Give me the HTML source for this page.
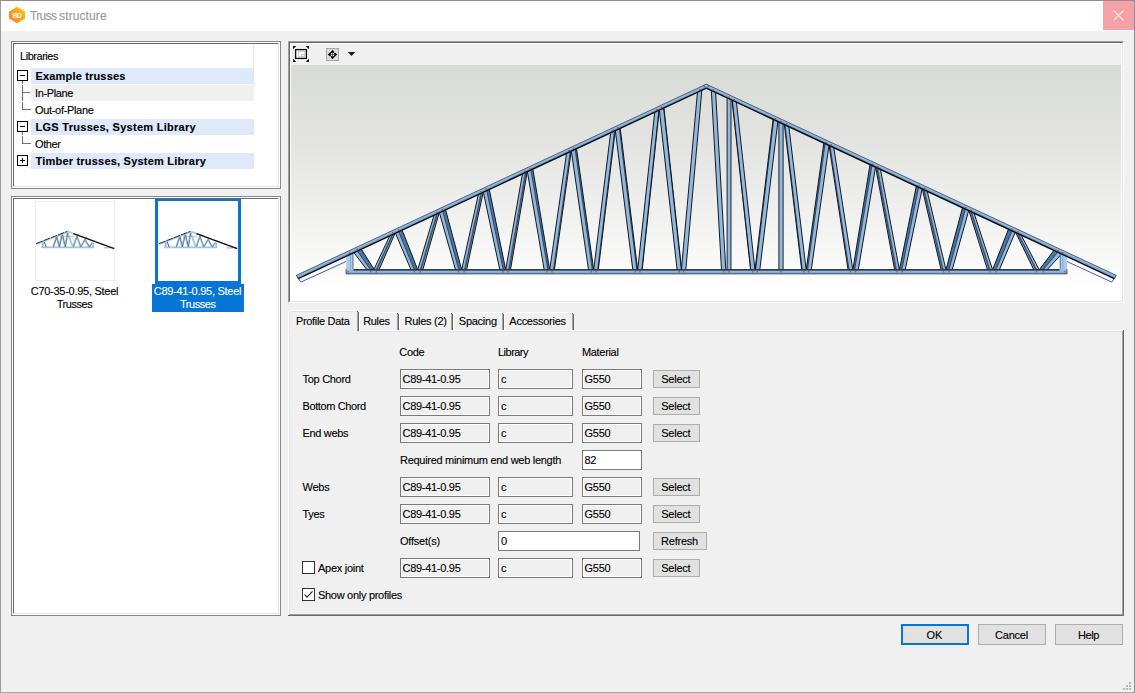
<!DOCTYPE html>
<html lang="en"><head><meta charset="utf-8"><title>Truss structure</title>
<style>
html,body{margin:0;padding:0;}
body{width:1135px;height:693px;overflow:hidden;background:#f0f0f0;position:relative;font-family:"Liberation Sans", sans-serif;font-size:11px;}
div,span.t,svg{position:absolute;box-sizing:border-box;}
span.t{white-space:nowrap;-webkit-text-stroke:0.12px currentColor;}
.inp{border:1px solid #7a7a7a;background:#f0f0f0;box-shadow:inset 0 0 0 1px #fff;}
.inpw{border:1px solid #7a7a7a;background:#fff;}
.btn{border:1px solid #adadad;background:#e1e1e1;}
</style></head><body>

<div style="left:0px;top:0px;width:1135px;height:693px;background:#f0f0f0;"></div>
<div style="left:0px;top:0px;width:1135px;height:1px;background:#8f8f8f;"></div>
<div style="left:0px;top:1px;width:1px;height:692px;background:#9c9c9c;"></div>
<div style="left:1134px;top:1px;width:1px;height:692px;background:#8c8c8c;"></div>
<div style="left:0px;top:692px;width:1135px;height:1px;background:#a6a6a6;"></div>
<div style="left:1px;top:1px;width:1133px;height:30px;background:#ffffff;"></div>
<div style="left:1103px;top:1px;width:31px;height:29px;background:#f5a1a8;"></div>
<svg style="left:1103px;top:1px" width="31" height="29" viewBox="0 0 31 29"><path d="M10.5 9.5 L20.5 19.5 M20.5 9.5 L10.5 19.5" stroke="#fde9ea" stroke-width="1.1" fill="none"/></svg>
<svg style="left:8px;top:6px" width="18" height="18" viewBox="8 6 18 18">
<defs><linearGradient id="hg" x1="0" y1="1" x2="1" y2="0"><stop offset="0" stop-color="#f5861f"/><stop offset="0.5" stop-color="#f99d1c"/><stop offset="1" stop-color="#ffc60b"/></linearGradient></defs>
<path d="M17 7.6 L24.300 11.800 L24.300 18.200 L17 22.400 L9.700 18.200 L9.700 11.800 Z" fill="url(#hg)" stroke="url(#hg)" stroke-width="1.3" stroke-linejoin="round"/>
<text x="17.100" y="17.700" font-family='"Liberation Sans",sans-serif' font-size="6.800" font-weight="bold" fill="#fff" text-anchor="middle" letter-spacing="-0.3">BD</text></svg>
<span class="t" style="left:30px;top:9.03px;font-size:12px;line-height:14px;color:#999999;word-spacing:-0.5px;"><span style="letter-spacing:-0.66px">Truss</span> <span style="letter-spacing:0.1px">structure</span></span>
<div style="left:11px;top:41px;width:270px;height:148px;border:1px solid #828790;background:#fff;"></div>
<div style="left:13px;top:43px;width:266px;height:1px;background:#696969;"></div>
<div style="left:13px;top:43px;width:1px;height:144px;background:#696969;"></div>
<div style="left:13px;top:186px;width:266px;height:1px;background:#e3e3e3;"></div>
<div style="left:278px;top:43px;width:1px;height:144px;background:#e3e3e3;"></div>
<div style="left:253px;top:44px;width:1px;height:24px;background:#e5e5e5;"></div>
<span class="t" id="t0" style="left:20px;top:49.86px;font-size:11px;line-height:13px;color:#000;letter-spacing:-0.465px;">Libraries</span>
<div style="left:31px;top:68px;width:223px;height:16px;background:#dfe9fc;"></div>
<span class="t" id="t1" style="left:35.5px;top:69.86px;font-size:11px;line-height:13px;color:#000;font-weight:bold;letter-spacing:0.171px;">Example trusses</span>
<div style="left:31px;top:85px;width:223px;height:16px;background:#f0f0f0;"></div>
<span class="t" id="t2" style="left:35px;top:86.86px;font-size:11px;line-height:13px;color:#000;letter-spacing:-0.373px;">In-Plane</span>
<span class="t" id="t3" style="left:35px;top:103.86px;font-size:11px;line-height:13px;color:#000;letter-spacing:-0.323px;">Out-of-Plane</span>
<div style="left:31px;top:119px;width:223px;height:16px;background:#dfe9fc;"></div>
<span class="t" id="t4" style="left:35.5px;top:120.86px;font-size:11px;line-height:13px;color:#000;font-weight:bold;letter-spacing:0.283px;">LGS Trusses, System Library</span>
<span class="t" id="t5" style="left:35px;top:137.86px;font-size:11px;line-height:13px;color:#000;letter-spacing:-0.403px;">Other</span>
<div style="left:31px;top:153px;width:223px;height:16px;background:#dfe9fc;"></div>
<span class="t" id="t6" style="left:35.5px;top:154.86px;font-size:11px;line-height:13px;color:#000;font-weight:bold;letter-spacing:0.208px;">Timber trusses, System Library</span>
<svg style="left:14px;top:44px" width="30" height="140" viewBox="14 44 30 140" shape-rendering="crispEdges"><rect x="22" y="81" width="1" height="3" fill="#707070"/><rect x="22" y="85" width="1" height="16" fill="#707070"/><rect x="22" y="102" width="1" height="8" fill="#707070"/><rect x="22" y="92" width="8" height="1" fill="#707070"/><rect x="22" y="109" width="9" height="1" fill="#707070"/><rect x="22" y="132" width="1" height="3" fill="#707070"/><rect x="22" y="136" width="1" height="8" fill="#707070"/><rect x="22" y="143" width="9" height="1" fill="#707070"/><rect x="17.5" y="70.5" width="10" height="10" fill="#fff" stroke="#000" stroke-width="1"/><rect x="20" y="75" width="5" height="1" fill="#000"/><rect x="17.5" y="121.5" width="10" height="10" fill="#fff" stroke="#000" stroke-width="1"/><rect x="20" y="126" width="5" height="1" fill="#000"/><rect x="17.5" y="155.5" width="10" height="10" fill="#fff" stroke="#000" stroke-width="1"/><rect x="20" y="160" width="5" height="1" fill="#000"/><rect x="22" y="158" width="1" height="5" fill="#000"/></svg>
<div style="left:11px;top:196px;width:270px;height:420px;border:1px solid #828790;background:#fff;"></div>
<div style="left:13px;top:198px;width:266px;height:1px;background:#696969;"></div>
<div style="left:13px;top:198px;width:1px;height:416px;background:#696969;"></div>
<div style="left:13px;top:613px;width:266px;height:1px;background:#e3e3e3;"></div>
<div style="left:278px;top:198px;width:1px;height:416px;background:#e3e3e3;"></div>
<div style="left:35px;top:201px;width:80px;height:80px;border:1px solid #ececec;background:#fff;"></div>
<div style="left:155px;top:199px;width:86px;height:85px;border:3px solid #0675d6;border-top-width:2px;background:#fff;"></div>
<div style="left:152px;top:284px;width:92px;height:28px;background:#0675d6;"></div>
<span class="t" id="t7" style="left:74.5px;top:284.86px;font-size:11px;line-height:13px;color:#000;letter-spacing:-0.269px;transform:translateX(-50%);">C70-35-0.95, Steel</span>
<span class="t" id="t8" style="left:74.5px;top:297.86px;font-size:11px;line-height:13px;color:#000;letter-spacing:-0.460px;transform:translateX(-50%);">Trusses</span>
<span class="t" id="t9" style="left:197.5px;top:284.86px;font-size:11px;line-height:13px;color:#fff;letter-spacing:-0.269px;transform:translateX(-50%);">C89-41-0.95, Steel</span>
<span class="t" id="t10" style="left:197.7px;top:297.86px;font-size:11px;line-height:13px;color:#fff;letter-spacing:-0.460px;transform:translateX(-50%);">Trusses</span>
<svg style="left:35px;top:201px" width="80" height="80" viewBox="35 201 80 80"><path d="M41.200 247.400 L94.300 247.400" stroke="#9dc4e8" stroke-width="1.7" fill="none"/><path d="M103.500 247.800 L110 247.800" stroke="#9dc4e8" stroke-width="1.3" fill="none"/><path d="M42.700 241.300 L42.700 247.500" stroke="#9dc4e8" stroke-width="2.2" fill="none"/><path d="M93.200 243 L93.200 247.500" stroke="#9dc4e8" stroke-width="1.6" fill="none"/><path d="M53.0 247.0 L56.5 236.4 L59.0 247.0 L62.0 234.2 L65.0 247.0 L67.4 232.6 L73.0 247.0 L76.7 236.2 L80.5 247.0 L84.8 239.4 L89.0 247.0 L92.2 242.4" stroke="#9dc4e8" stroke-width="1.7" fill="none" stroke-linejoin="round"/><path d="M44.0 241.5 L46.2 247.0" stroke="#39434e" stroke-width="0.9" fill="none"/><path d="M53.5 247.0 L57.0 236.4 L59.5 247.0 L62.5 234.2 L65.5 247.0 L67.9 232.6" stroke="#3a4450" stroke-width="0.55" fill="none"/><path d="M73.5 247.0 L77.2 236.2 L81.0 247.0 L85.3 239.4 L89.5 247.0 L92.7 242.4" stroke="#4a545f" stroke-width="0.5" fill="none"/><path d="M60 236.400 L74.500 236.400" stroke="#8f979f" stroke-width="0.6" fill="none"/><path d="M36.1 244.5 L67.4 232.20000000000002" stroke="#9dc4e8" stroke-width="1.3" fill="none"/><path d="M36.1 243.6 L67.4 231.3" stroke="#232b35" stroke-width="1" stroke-dasharray="7 0.800" fill="none"/><path d="M67.4 231.3 L74.4 233.9" stroke="#9dc4e8" stroke-width="1.5" fill="none"/><path d="M73.4 233.53 L114.2 248.7" stroke="#0c0c0c" stroke-width="1.35" fill="none"/><rect x="77.4" y="234.3" width="1.100" height="0.900" fill="#b0242c"/><rect x="85.4" y="237.3" width="1.100" height="0.900" fill="#b0242c"/><rect x="93.4" y="240.3" width="1.100" height="0.900" fill="#b0242c"/><rect x="101.4" y="243.2" width="1.100" height="0.900" fill="#b0242c"/><rect x="112.4" y="247.3" width="1.100" height="0.900" fill="#b0242c"/></svg>
<svg style="left:158px;top:201px" width="80" height="80" viewBox="35 201 80 80"><path d="M41.200 247.400 L94.300 247.400" stroke="#9dc4e8" stroke-width="1.7" fill="none"/><path d="M103.500 247.800 L110 247.800" stroke="#9dc4e8" stroke-width="1.3" fill="none"/><path d="M42.700 241.300 L42.700 247.500" stroke="#9dc4e8" stroke-width="2.2" fill="none"/><path d="M93.200 243 L93.200 247.500" stroke="#9dc4e8" stroke-width="1.6" fill="none"/><path d="M53.0 247.0 L56.5 236.4 L59.0 247.0 L62.0 234.2 L65.0 247.0 L67.4 232.6 L73.0 247.0 L76.7 236.2 L80.5 247.0 L84.8 239.4 L89.0 247.0 L92.2 242.4" stroke="#9dc4e8" stroke-width="1.7" fill="none" stroke-linejoin="round"/><path d="M44.0 241.5 L46.2 247.0" stroke="#39434e" stroke-width="0.9" fill="none"/><path d="M53.5 247.0 L57.0 236.4 L59.5 247.0 L62.5 234.2 L65.5 247.0 L67.9 232.6" stroke="#3a4450" stroke-width="0.55" fill="none"/><path d="M73.5 247.0 L77.2 236.2 L81.0 247.0 L85.3 239.4 L89.5 247.0 L92.7 242.4" stroke="#4a545f" stroke-width="0.5" fill="none"/><path d="M60 236.400 L74.500 236.400" stroke="#8f979f" stroke-width="0.6" fill="none"/><path d="M36.1 244.5 L67.4 232.20000000000002" stroke="#9dc4e8" stroke-width="1.3" fill="none"/><path d="M36.1 243.6 L67.4 231.3" stroke="#232b35" stroke-width="1" stroke-dasharray="7 0.800" fill="none"/><path d="M67.4 231.3 L74.4 233.9" stroke="#9dc4e8" stroke-width="1.5" fill="none"/><path d="M73.4 233.53 L114.2 248.7" stroke="#0c0c0c" stroke-width="1.35" fill="none"/><rect x="77.4" y="234.3" width="1.100" height="0.900" fill="#b0242c"/><rect x="85.4" y="237.3" width="1.100" height="0.900" fill="#b0242c"/><rect x="93.4" y="240.3" width="1.100" height="0.900" fill="#b0242c"/><rect x="101.4" y="243.2" width="1.100" height="0.900" fill="#b0242c"/><rect x="112.4" y="247.3" width="1.100" height="0.900" fill="#b0242c"/></svg>
<div style="left:288px;top:41px;width:836px;height:262px;background:#f0f0f0;border-top:1px solid #a0a0a0;border-left:1px solid #a0a0a0;border-right:1px solid #fff;border-bottom:1px solid #fff;"></div>
<div style="left:289px;top:42px;width:834px;height:260px;border-top:1px solid #696969;border-left:1px solid #696969;border-right:1px solid #e3e3e3;border-bottom:1px solid #e3e3e3;"></div>
<div style="left:290px;top:43px;width:832px;height:258px;background:#fff;"></div>
<div style="left:291px;top:44px;width:830px;height:21px;background:#f0f0f0;"></div>
<div style="left:291px;top:65px;width:830px;height:236px;background:linear-gradient(to bottom,#d8dad5 0%,#e4e5e2 35%,#f3f3f2 70%,#ffffff 95%);"></div>
<svg style="left:291px;top:44px" width="70" height="21" viewBox="291 44 70 21">
<path d="M293 46 H296.300 L293 49.300 Z M309 46 H305.700 L309 49.300 Z M293 62 H296.300 L293 58.700 Z M309 62 H305.700 L309 58.700 Z" fill="#111"/>
<rect x="295.600" y="49.600" width="10.800" height="8.800" fill="#fdfdfd" stroke="#0a0a0a" stroke-width="1.300"/>
<rect x="298.500" y="51.500" width="6" height="5" fill="#fff" stroke="#d2d2d2" stroke-width="1"/>
<rect x="301.500" y="54.500" width="3" height="2" fill="#fafafa" stroke="#c6c6c6" stroke-width="1"/>
<rect x="326.500" y="48.500" width="12" height="12" fill="#dcdcdc" stroke="#a6a6a6" stroke-width="1"/>
<path d="M332.500 49.700 L335.200 52.900 H329.800 Z M332.500 59.300 L335.200 56.100 H329.800 Z M327.700 54.500 L330.900 51.800 V57.200 Z M337.300 54.500 L334.100 51.800 V57.200 Z" fill="#0c0c0c"/>
<rect x="331" y="53" width="3" height="3" fill="#e6e6e6"/>
<path d="M332.500 52 V57 M330 54.500 H335" stroke="#444" stroke-width="0.800"/>
<path d="M347.700 52 H355.300 L351.500 56 Z" fill="#1c1c1c"/>
</svg>
<svg style="left:291px;top:65px" width="831" height="236" viewBox="291 65 831 236"><path d="M298.6 278.7 L300.8 282.1 L346 261.500" stroke="#3a3fb5" stroke-width="0.9" fill="none"/><path d="M1114.0 278.7 L1111.8 282.1 L1067 261.500" stroke="#3a3fb5" stroke-width="0.9" fill="none"/><polygon points="353.6,252.2 357.1,250.6 370.5,269.8 366.9,269.8" fill="#93b8de"/><polygon points="357.1,250.6 361.1,248.8 374.4,269.8 370.5,269.8" fill="#4876a3"/><line x1="357.1" y1="250.6" x2="370.5" y2="269.8" stroke="#101a28" stroke-width="0.7"/><line x1="353.6" y1="252.2" x2="366.9" y2="269.8" stroke="#0b0f16" stroke-width="0.95"/><line x1="361.1" y1="248.8" x2="374.4" y2="269.8" stroke="#0b0f16" stroke-width="0.95"/><polygon points="390.0,235.3 393.1,233.8 376.8,269.8 373.7,269.8" fill="#93b8de"/><polygon points="393.1,233.8 395.3,232.8 379.0,269.8 376.8,269.8" fill="#6f9bc6"/><line x1="393.1" y1="233.8" x2="376.8" y2="269.8" stroke="#101a28" stroke-width="0.7"/><line x1="390.0" y1="235.3" x2="373.7" y2="269.8" stroke="#0b0f16" stroke-width="0.95"/><line x1="395.3" y1="232.8" x2="379.0" y2="269.8" stroke="#0b0f16" stroke-width="0.95"/><line x1="392.4" y1="234.1" x2="376.1" y2="269.8" stroke="#1c2c40" stroke-width="0.5"/><polygon points="395.3,232.8 398.5,231.3 414.3,269.8 411.0,269.8" fill="#93b8de"/><polygon points="398.5,231.3 402.0,229.7 417.7,269.8 414.3,269.8" fill="#4876a3"/><line x1="398.5" y1="231.3" x2="414.3" y2="269.8" stroke="#101a28" stroke-width="0.7"/><line x1="395.3" y1="232.8" x2="411.0" y2="269.8" stroke="#0b0f16" stroke-width="0.95"/><line x1="402.0" y1="229.7" x2="417.7" y2="269.8" stroke="#0b0f16" stroke-width="0.95"/><polygon points="434.2,214.6 437.4,213.2 420.9,269.8 417.7,269.8" fill="#93b8de"/><polygon points="437.4,213.2 439.3,212.3 422.8,269.8 420.9,269.8" fill="#6f9bc6"/><line x1="437.4" y1="213.2" x2="420.9" y2="269.8" stroke="#101a28" stroke-width="0.7"/><line x1="434.2" y1="214.6" x2="417.7" y2="269.8" stroke="#0b0f16" stroke-width="0.95"/><line x1="439.3" y1="212.3" x2="422.8" y2="269.8" stroke="#0b0f16" stroke-width="0.95"/><line x1="436.7" y1="213.5" x2="420.2" y2="269.8" stroke="#1c2c40" stroke-width="0.5"/><polygon points="439.3,212.3 442.6,210.8 458.8,269.8 455.5,269.8" fill="#93b8de"/><polygon points="442.6,210.8 445.5,209.4 461.7,269.8 458.8,269.8" fill="#4876a3"/><line x1="442.6" y1="210.8" x2="458.8" y2="269.8" stroke="#101a28" stroke-width="0.7"/><line x1="439.3" y1="212.3" x2="455.5" y2="269.8" stroke="#0b0f16" stroke-width="0.95"/><line x1="445.5" y1="209.4" x2="461.7" y2="269.8" stroke="#0b0f16" stroke-width="0.95"/><polygon points="478.4,194.1 481.7,192.5 465.0,269.8 461.7,269.8" fill="#93b8de"/><polygon points="481.7,192.5 483.3,191.8 466.6,269.8 465.0,269.8" fill="#6f9bc6"/><line x1="481.7" y1="192.5" x2="465.0" y2="269.8" stroke="#101a28" stroke-width="0.7"/><line x1="478.4" y1="194.1" x2="461.7" y2="269.8" stroke="#0b0f16" stroke-width="0.95"/><line x1="483.3" y1="191.8" x2="466.6" y2="269.8" stroke="#0b0f16" stroke-width="0.95"/><line x1="481.0" y1="192.8" x2="464.3" y2="269.8" stroke="#1c2c40" stroke-width="0.5"/><polygon points="483.3,191.8 486.7,190.2 503.3,269.8 499.8,269.8" fill="#93b8de"/><polygon points="486.7,190.2 489.2,189.0 505.7,269.8 503.3,269.8" fill="#4876a3"/><line x1="486.7" y1="190.2" x2="503.3" y2="269.8" stroke="#101a28" stroke-width="0.7"/><line x1="483.3" y1="191.8" x2="499.8" y2="269.8" stroke="#0b0f16" stroke-width="0.95"/><line x1="489.2" y1="189.0" x2="505.7" y2="269.8" stroke="#0b0f16" stroke-width="0.95"/><polygon points="522.5,173.5 526.0,171.9 509.2,269.8 505.7,269.8" fill="#93b8de"/><polygon points="526.0,171.9 527.3,171.3 510.5,269.8 509.2,269.8" fill="#6f9bc6"/><line x1="526.0" y1="171.9" x2="509.2" y2="269.8" stroke="#101a28" stroke-width="0.7"/><line x1="522.5" y1="173.5" x2="505.7" y2="269.8" stroke="#0b0f16" stroke-width="0.95"/><line x1="527.3" y1="171.3" x2="510.5" y2="269.8" stroke="#0b0f16" stroke-width="0.95"/><line x1="525.2" y1="172.2" x2="508.4" y2="269.8" stroke="#1c2c40" stroke-width="0.5"/><polygon points="527.3,171.3 530.9,169.6 547.8,269.8 544.2,269.8" fill="#93b8de"/><polygon points="530.9,169.6 532.8,168.7 549.7,269.8 547.8,269.8" fill="#4876a3"/><line x1="530.9" y1="169.6" x2="547.8" y2="269.8" stroke="#101a28" stroke-width="0.7"/><line x1="527.3" y1="171.3" x2="544.2" y2="269.8" stroke="#0b0f16" stroke-width="0.95"/><line x1="532.8" y1="168.7" x2="549.7" y2="269.8" stroke="#0b0f16" stroke-width="0.95"/><polygon points="566.6,152.9 570.3,151.2 553.4,269.8 549.7,269.8" fill="#93b8de"/><polygon points="570.3,151.2 571.3,150.7 554.4,269.8 553.4,269.8" fill="#6f9bc6"/><line x1="570.3" y1="151.2" x2="553.4" y2="269.8" stroke="#101a28" stroke-width="0.7"/><line x1="566.6" y1="152.9" x2="549.7" y2="269.8" stroke="#0b0f16" stroke-width="0.95"/><line x1="571.3" y1="150.7" x2="554.4" y2="269.8" stroke="#0b0f16" stroke-width="0.95"/><polygon points="571.3,150.7 575.1,149.0 592.3,269.8 588.5,269.8" fill="#93b8de"/><polygon points="575.1,149.0 576.5,148.3 593.7,269.8 592.3,269.8" fill="#4876a3"/><line x1="575.1" y1="149.0" x2="592.3" y2="269.8" stroke="#101a28" stroke-width="0.7"/><line x1="571.3" y1="150.7" x2="588.5" y2="269.8" stroke="#0b0f16" stroke-width="0.95"/><line x1="576.5" y1="148.3" x2="593.7" y2="269.8" stroke="#0b0f16" stroke-width="0.95"/><polygon points="610.7,132.4 614.6,130.5 597.6,269.8 593.7,269.8" fill="#93b8de"/><polygon points="614.6,130.5 615.3,130.2 598.3,269.8 597.6,269.8" fill="#6f9bc6"/><line x1="614.6" y1="130.5" x2="597.6" y2="269.8" stroke="#101a28" stroke-width="0.7"/><line x1="610.7" y1="132.4" x2="593.7" y2="269.8" stroke="#0b0f16" stroke-width="0.95"/><line x1="615.3" y1="130.2" x2="598.3" y2="269.8" stroke="#0b0f16" stroke-width="0.95"/><polygon points="615.3,130.2 619.3,128.4 636.8,269.8 632.8,269.8" fill="#93b8de"/><polygon points="619.3,128.4 620.2,127.9 637.7,269.8 636.8,269.8" fill="#4876a3"/><line x1="619.3" y1="128.4" x2="636.8" y2="269.8" stroke="#101a28" stroke-width="0.7"/><line x1="615.3" y1="130.2" x2="632.8" y2="269.8" stroke="#0b0f16" stroke-width="0.95"/><line x1="620.2" y1="127.9" x2="637.7" y2="269.8" stroke="#0b0f16" stroke-width="0.95"/><polygon points="654.8,111.8 658.9,109.9 641.8,269.8 637.7,269.8" fill="#93b8de"/><polygon points="658.9,109.9 659.3,109.7 642.2,269.8 641.8,269.8" fill="#6f9bc6"/><line x1="658.9" y1="109.9" x2="641.8" y2="269.8" stroke="#101a28" stroke-width="0.7"/><line x1="654.8" y1="111.8" x2="637.7" y2="269.8" stroke="#0b0f16" stroke-width="0.95"/><line x1="659.3" y1="109.7" x2="642.2" y2="269.8" stroke="#0b0f16" stroke-width="0.95"/><polygon points="659.3,109.7 663.5,107.8 681.3,269.8 677.1,269.8" fill="#93b8de"/><polygon points="663.5,107.8 663.9,107.6 681.7,269.8 681.3,269.8" fill="#4876a3"/><line x1="663.5" y1="107.8" x2="681.3" y2="269.8" stroke="#101a28" stroke-width="0.7"/><line x1="659.3" y1="109.7" x2="677.1" y2="269.8" stroke="#0b0f16" stroke-width="0.95"/><line x1="663.9" y1="107.6" x2="681.7" y2="269.8" stroke="#0b0f16" stroke-width="0.95"/><polygon points="697.5,91.9 701.8,89.9 685.7,269.8 681.4,269.8" fill="#93b8de"/><line x1="697.5" y1="91.9" x2="681.4" y2="269.8" stroke="#0b0f16" stroke-width="0.95"/><line x1="701.9" y1="89.9" x2="685.8" y2="269.8" stroke="#0b0f16" stroke-width="0.95"/><polygon points="711.4,90.2 715.6,92.2 725.8,269.8 721.5,269.8" fill="#93b8de"/><line x1="711.3" y1="90.1" x2="721.5" y2="269.8" stroke="#0b0f16" stroke-width="0.95"/><line x1="715.6" y1="92.2" x2="725.8" y2="269.8" stroke="#0b0f16" stroke-width="0.95"/><polygon points="732.3,99.9 736.4,101.8 755.0,269.8 750.8,269.8" fill="#93b8de"/><polygon points="732.0,99.8 732.3,99.9 750.8,269.8 750.6,269.8" fill="#6f9bc6"/><line x1="732.3" y1="99.9" x2="750.8" y2="269.8" stroke="#101a28" stroke-width="0.7"/><line x1="732.0" y1="99.8" x2="750.6" y2="269.8" stroke="#0b0f16" stroke-width="0.95"/><line x1="736.4" y1="101.8" x2="755.0" y2="269.8" stroke="#0b0f16" stroke-width="0.95"/><polygon points="773.8,119.3 777.9,121.2 759.8,269.8 755.7,269.8" fill="#93b8de"/><polygon points="773.1,119.0 773.8,119.3 755.7,269.8 755.0,269.8" fill="#4876a3"/><line x1="773.8" y1="119.3" x2="755.7" y2="269.8" stroke="#101a28" stroke-width="0.7"/><line x1="773.1" y1="119.0" x2="755.0" y2="269.8" stroke="#0b0f16" stroke-width="0.95"/><line x1="777.9" y1="121.2" x2="759.8" y2="269.8" stroke="#0b0f16" stroke-width="0.95"/><polygon points="1058.1,251.8 1062.0,253.6 1047.0,269.8 1043.2,269.8" fill="#93b8de"/><polygon points="1054.2,250.0 1058.1,251.8 1043.2,269.8 1039.2,269.8" fill="#4876a3"/><line x1="1058.1" y1="251.8" x2="1043.2" y2="269.8" stroke="#101a28" stroke-width="0.7"/><line x1="1054.2" y1="250.0" x2="1039.2" y2="269.8" stroke="#0b0f16" stroke-width="0.95"/><line x1="1062.0" y1="253.6" x2="1047.0" y2="269.8" stroke="#0b0f16" stroke-width="0.95"/><polygon points="1017.6,232.9 1020.8,234.4 1039.2,269.8 1036.0,269.8" fill="#93b8de"/><polygon points="1015.4,231.9 1017.6,232.9 1036.0,269.8 1033.8,269.8" fill="#6f9bc6"/><line x1="1017.6" y1="232.9" x2="1036.0" y2="269.8" stroke="#101a28" stroke-width="0.7"/><line x1="1015.4" y1="231.9" x2="1033.8" y2="269.8" stroke="#0b0f16" stroke-width="0.95"/><line x1="1020.8" y1="234.4" x2="1039.2" y2="269.8" stroke="#0b0f16" stroke-width="0.95"/><line x1="1018.3" y1="233.3" x2="1036.7" y2="269.8" stroke="#1c2c40" stroke-width="0.5"/><polygon points="1012.2,230.4 1015.4,231.9 999.3,269.8 996.0,269.8" fill="#93b8de"/><polygon points="1008.7,228.8 1012.2,230.4 996.0,269.8 992.6,269.8" fill="#4876a3"/><line x1="1012.2" y1="230.4" x2="996.0" y2="269.8" stroke="#101a28" stroke-width="0.7"/><line x1="1008.7" y1="228.8" x2="992.6" y2="269.8" stroke="#0b0f16" stroke-width="0.95"/><line x1="1015.4" y1="231.9" x2="999.3" y2="269.8" stroke="#0b0f16" stroke-width="0.95"/><polygon points="970.7,211.1 973.9,212.6 992.6,269.8 989.4,269.8" fill="#93b8de"/><polygon points="968.8,210.2 970.7,211.1 989.4,269.8 987.5,269.8" fill="#6f9bc6"/><line x1="970.7" y1="211.1" x2="989.4" y2="269.8" stroke="#101a28" stroke-width="0.7"/><line x1="968.8" y1="210.2" x2="987.5" y2="269.8" stroke="#0b0f16" stroke-width="0.95"/><line x1="973.9" y1="212.6" x2="992.6" y2="269.8" stroke="#0b0f16" stroke-width="0.95"/><line x1="971.4" y1="211.4" x2="990.1" y2="269.8" stroke="#1c2c40" stroke-width="0.5"/><polygon points="965.5,208.6 968.8,210.2 952.2,269.8 948.9,269.8" fill="#93b8de"/><polygon points="962.6,207.3 965.5,208.6 948.9,269.8 946.0,269.8" fill="#4876a3"/><line x1="965.5" y1="208.6" x2="948.9" y2="269.8" stroke="#101a28" stroke-width="0.7"/><line x1="962.6" y1="207.3" x2="946.0" y2="269.8" stroke="#0b0f16" stroke-width="0.95"/><line x1="968.8" y1="210.2" x2="952.2" y2="269.8" stroke="#0b0f16" stroke-width="0.95"/><polygon points="923.7,189.2 927.1,190.7 946.0,269.8 942.6,269.8" fill="#93b8de"/><polygon points="922.2,188.5 923.7,189.2 942.6,269.8 941.1,269.8" fill="#6f9bc6"/><line x1="923.7" y1="189.2" x2="942.6" y2="269.8" stroke="#101a28" stroke-width="0.7"/><line x1="922.2" y1="188.5" x2="941.1" y2="269.8" stroke="#0b0f16" stroke-width="0.95"/><line x1="927.1" y1="190.7" x2="946.0" y2="269.8" stroke="#0b0f16" stroke-width="0.95"/><line x1="924.5" y1="189.5" x2="943.4" y2="269.8" stroke="#1c2c40" stroke-width="0.5"/><polygon points="918.7,186.8 922.2,188.5 905.2,269.8 901.8,269.8" fill="#93b8de"/><polygon points="916.4,185.7 918.7,186.8 901.8,269.8 899.4,269.8" fill="#4876a3"/><line x1="918.7" y1="186.8" x2="901.8" y2="269.8" stroke="#101a28" stroke-width="0.7"/><line x1="916.4" y1="185.7" x2="899.4" y2="269.8" stroke="#0b0f16" stroke-width="0.95"/><line x1="922.2" y1="188.5" x2="905.2" y2="269.8" stroke="#0b0f16" stroke-width="0.95"/><polygon points="876.8,167.3 880.4,169.0 899.4,269.8 895.9,269.8" fill="#93b8de"/><polygon points="875.6,166.7 876.8,167.3 895.9,269.8 894.6,269.8" fill="#6f9bc6"/><line x1="876.8" y1="167.3" x2="895.9" y2="269.8" stroke="#101a28" stroke-width="0.7"/><line x1="875.6" y1="166.7" x2="894.6" y2="269.8" stroke="#0b0f16" stroke-width="0.95"/><line x1="880.4" y1="169.0" x2="899.4" y2="269.8" stroke="#0b0f16" stroke-width="0.95"/><line x1="877.6" y1="167.7" x2="896.6" y2="269.8" stroke="#1c2c40" stroke-width="0.5"/><polygon points="872.0,165.0 875.6,166.7 858.3,269.8 854.6,269.8" fill="#93b8de"/><polygon points="870.1,164.2 872.0,165.0 854.6,269.8 852.8,269.8" fill="#4876a3"/><line x1="872.0" y1="165.0" x2="854.6" y2="269.8" stroke="#101a28" stroke-width="0.7"/><line x1="870.1" y1="164.2" x2="852.8" y2="269.8" stroke="#0b0f16" stroke-width="0.95"/><line x1="875.6" y1="166.7" x2="858.3" y2="269.8" stroke="#0b0f16" stroke-width="0.95"/><polygon points="829.9,145.4 833.7,147.2 852.8,269.8 849.1,269.8" fill="#93b8de"/><polygon points="829.0,145.0 829.9,145.4 849.1,269.8 848.1,269.8" fill="#6f9bc6"/><line x1="829.9" y1="145.4" x2="849.1" y2="269.8" stroke="#101a28" stroke-width="0.7"/><line x1="829.0" y1="145.0" x2="848.1" y2="269.8" stroke="#0b0f16" stroke-width="0.95"/><line x1="833.7" y1="147.2" x2="852.8" y2="269.8" stroke="#0b0f16" stroke-width="0.95"/><polygon points="825.2,143.2 829.0,145.0 811.3,269.8 807.5,269.8" fill="#93b8de"/><polygon points="823.9,142.6 825.2,143.2 807.5,269.8 806.2,269.8" fill="#4876a3"/><line x1="825.2" y1="143.2" x2="807.5" y2="269.8" stroke="#101a28" stroke-width="0.7"/><line x1="823.9" y1="142.6" x2="806.2" y2="269.8" stroke="#0b0f16" stroke-width="0.95"/><line x1="829.0" y1="145.0" x2="811.3" y2="269.8" stroke="#0b0f16" stroke-width="0.95"/><polygon points="784.9,124.4 788.8,126.3 806.2,269.8 802.3,269.8" fill="#93b8de"/><polygon points="784.3,124.2 784.9,124.4 802.3,269.8 801.7,269.8" fill="#6f9bc6"/><line x1="784.9" y1="124.4" x2="802.3" y2="269.8" stroke="#101a28" stroke-width="0.7"/><line x1="784.3" y1="124.2" x2="801.7" y2="269.8" stroke="#0b0f16" stroke-width="0.95"/><line x1="788.8" y1="126.3" x2="806.2" y2="269.8" stroke="#0b0f16" stroke-width="0.95"/><polygon points="727.1,97.5 731.0,99.3 731.0,269.8 727.1,269.8" fill="#93b8de"/><line x1="727.1" y1="97.5" x2="727.1" y2="269.8" stroke="#0b0f16" stroke-width="0.9"/><line x1="731.0" y1="99.3" x2="731.0" y2="269.8" stroke="#0b0f16" stroke-width="0.9"/><polygon points="778.9,121.6 783.1,123.6 783.1,269.8 778.9,269.8" fill="#93b8de"/><line x1="778.9" y1="121.6" x2="778.9" y2="269.8" stroke="#0b0f16" stroke-width="0.9"/><line x1="783.1" y1="123.6" x2="783.1" y2="269.8" stroke="#0b0f16" stroke-width="0.9"/><polygon points="346.2,256.1 353.0,252.9 353.0,269.8 346.2,269.8" fill="#a8ccee"/><line x1="350.5" y1="254.1" x2="350.5" y2="269.2" stroke="#6d95bd" stroke-width="0.6"/><line x1="353.0" y1="252.9" x2="353.0" y2="269.2" stroke="#27415c" stroke-width="0.7"/><polygon points="1060.2,253.2 1067.0,256.4 1067.0,269.8 1060.2,269.8" fill="#a8ccee"/><line x1="1062.7" y1="254.4" x2="1062.7" y2="269.2" stroke="#6d95bd" stroke-width="0.6"/><line x1="1060.2" y1="253.2" x2="1060.2" y2="269.2" stroke="#27415c" stroke-width="0.7"/><polygon points="346.0,269.2 1067.0,269.2 1067.0,273.9 346.0,273.9" fill="#93b8de"/><line x1="353.5" y1="269.8" x2="1059.5" y2="269.8" stroke="#0b0f16" stroke-width="1.3"/><line x1="346.0" y1="273.0" x2="1067.0" y2="273.0" stroke="#6f9bc6" stroke-width="1.0"/><line x1="346.0" y1="273.9" x2="1067.0" y2="273.9" stroke="#1b2b3c" stroke-width="0.7"/><line x1="346.0" y1="269.2" x2="346.0" y2="273.9" stroke="#1b2b3c" stroke-width="0.7"/><line x1="1067.0" y1="269.2" x2="1067.0" y2="273.9" stroke="#1b2b3c" stroke-width="0.7"/><polygon points="296.4,275.3 706.3,84.2 706.3,88.7 298.4,278.9" fill="#93b8de"/><line x1="297.6" y1="277.4" x2="706.3" y2="87.0" stroke="#6f9bc6" stroke-width="0.8"/><line x1="296.4" y1="275.3" x2="706.3" y2="84.2" stroke="#1d3047" stroke-width="0.7"/><line x1="298.2" y1="278.6" x2="706.3" y2="88.1" stroke="#0b0f16" stroke-width="1.45"/><line x1="296.4" y1="275.3" x2="298.4" y2="278.9" stroke="#1b2b3c" stroke-width="0.8"/><polygon points="1116.2,275.3 706.3,84.2 706.3,88.7 1114.2,278.9" fill="#93b8de"/><line x1="1115.0" y1="277.4" x2="706.3" y2="87.0" stroke="#6f9bc6" stroke-width="0.8"/><line x1="1116.2" y1="275.3" x2="706.3" y2="84.2" stroke="#1d3047" stroke-width="0.7"/><line x1="1114.4" y1="278.6" x2="706.3" y2="88.1" stroke="#0b0f16" stroke-width="1.45"/><line x1="1116.2" y1="275.3" x2="1114.2" y2="278.9" stroke="#1b2b3c" stroke-width="0.8"/><polygon points="703.1,85.8 706.3,84.2 709.5,85.8 706.3,87.8" fill="#93b8de" stroke="#1d3047" stroke-width="0.5"/><rect x="356.7" y="248.6" width="1.300" height="1.300" fill="#c8323a"/><rect x="370.0" y="271.1" width="1.300" height="1.300" fill="#c8323a"/><rect x="392.0" y="232.2" width="1.300" height="1.300" fill="#c8323a"/><rect x="375.7" y="271.1" width="1.300" height="1.300" fill="#c8323a"/><rect x="398.0" y="229.4" width="1.300" height="1.300" fill="#c8323a"/><rect x="413.7" y="271.1" width="1.300" height="1.300" fill="#c8323a"/><rect x="436.1" y="211.6" width="1.300" height="1.300" fill="#c8323a"/><rect x="419.6" y="271.1" width="1.300" height="1.300" fill="#c8323a"/><rect x="441.8" y="209.0" width="1.300" height="1.300" fill="#c8323a"/><rect x="457.9" y="271.1" width="1.300" height="1.300" fill="#c8323a"/><rect x="480.2" y="191.1" width="1.300" height="1.300" fill="#c8323a"/><rect x="463.5" y="271.1" width="1.300" height="1.300" fill="#c8323a"/><rect x="485.6" y="188.5" width="1.300" height="1.300" fill="#c8323a"/><rect x="502.1" y="271.1" width="1.300" height="1.300" fill="#c8323a"/><rect x="524.3" y="170.5" width="1.300" height="1.300" fill="#c8323a"/><rect x="507.4" y="271.1" width="1.300" height="1.300" fill="#c8323a"/><rect x="529.4" y="168.1" width="1.300" height="1.300" fill="#c8323a"/><rect x="546.3" y="271.1" width="1.300" height="1.300" fill="#c8323a"/><rect x="568.3" y="150.0" width="1.300" height="1.300" fill="#c8323a"/><rect x="551.4" y="271.1" width="1.300" height="1.300" fill="#c8323a"/><rect x="573.3" y="147.7" width="1.300" height="1.300" fill="#c8323a"/><rect x="590.4" y="271.1" width="1.300" height="1.300" fill="#c8323a"/><rect x="612.4" y="129.4" width="1.300" height="1.300" fill="#c8323a"/><rect x="595.3" y="271.1" width="1.300" height="1.300" fill="#c8323a"/><rect x="617.1" y="127.2" width="1.300" height="1.300" fill="#c8323a"/><rect x="634.6" y="271.1" width="1.300" height="1.300" fill="#c8323a"/><rect x="656.4" y="108.9" width="1.300" height="1.300" fill="#c8323a"/><rect x="639.3" y="271.1" width="1.300" height="1.300" fill="#c8323a"/><rect x="660.9" y="106.8" width="1.300" height="1.300" fill="#c8323a"/><rect x="678.8" y="271.1" width="1.300" height="1.300" fill="#c8323a"/><rect x="699.1" y="89.0" width="1.300" height="1.300" fill="#c8323a"/><rect x="682.9" y="271.1" width="1.300" height="1.300" fill="#c8323a"/><rect x="712.8" y="89.3" width="1.300" height="1.300" fill="#c8323a"/><rect x="723.0" y="271.1" width="1.300" height="1.300" fill="#c8323a"/><rect x="733.6" y="99.0" width="1.300" height="1.300" fill="#c8323a"/><rect x="752.1" y="271.1" width="1.300" height="1.300" fill="#c8323a"/><rect x="774.9" y="118.2" width="1.300" height="1.300" fill="#c8323a"/><rect x="756.7" y="271.1" width="1.300" height="1.300" fill="#c8323a"/><rect x="1057.4" y="250.0" width="1.300" height="1.300" fill="#c8323a"/><rect x="1042.5" y="271.1" width="1.300" height="1.300" fill="#c8323a"/><rect x="1017.4" y="231.3" width="1.300" height="1.300" fill="#c8323a"/><rect x="1035.9" y="271.1" width="1.300" height="1.300" fill="#c8323a"/><rect x="1011.4" y="228.5" width="1.300" height="1.300" fill="#c8323a"/><rect x="995.3" y="271.1" width="1.300" height="1.300" fill="#c8323a"/><rect x="970.7" y="209.5" width="1.300" height="1.300" fill="#c8323a"/><rect x="989.4" y="271.1" width="1.300" height="1.300" fill="#c8323a"/><rect x="965.1" y="206.9" width="1.300" height="1.300" fill="#c8323a"/><rect x="948.4" y="271.1" width="1.300" height="1.300" fill="#c8323a"/><rect x="924.0" y="187.8" width="1.300" height="1.300" fill="#c8323a"/><rect x="942.9" y="271.1" width="1.300" height="1.300" fill="#c8323a"/><rect x="918.6" y="185.3" width="1.300" height="1.300" fill="#c8323a"/><rect x="901.7" y="271.1" width="1.300" height="1.300" fill="#c8323a"/><rect x="877.3" y="166.0" width="1.300" height="1.300" fill="#c8323a"/><rect x="896.4" y="271.1" width="1.300" height="1.300" fill="#c8323a"/><rect x="872.2" y="163.6" width="1.300" height="1.300" fill="#c8323a"/><rect x="854.9" y="271.1" width="1.300" height="1.300" fill="#c8323a"/><rect x="830.7" y="144.2" width="1.300" height="1.300" fill="#c8323a"/><rect x="849.8" y="271.1" width="1.300" height="1.300" fill="#c8323a"/><rect x="825.8" y="142.0" width="1.300" height="1.300" fill="#c8323a"/><rect x="808.1" y="271.1" width="1.300" height="1.300" fill="#c8323a"/><rect x="785.9" y="123.4" width="1.300" height="1.300" fill="#c8323a"/><rect x="803.3" y="271.1" width="1.300" height="1.300" fill="#c8323a"/><rect x="728.4" y="96.6" width="1.300" height="1.300" fill="#c8323a"/><rect x="728.4" y="271.1" width="1.300" height="1.300" fill="#c8323a"/><rect x="780.4" y="120.8" width="1.300" height="1.300" fill="#c8323a"/><rect x="780.4" y="271.1" width="1.300" height="1.300" fill="#c8323a"/><rect x="347.4" y="271.1" width="1.300" height="1.300" fill="#c8323a"/><rect x="1064.3" y="271.1" width="1.300" height="1.300" fill="#c8323a"/><rect x="348.9" y="252.3" width="1.300" height="1.300" fill="#c8323a"/><rect x="1062.3" y="252.2" width="1.300" height="1.300" fill="#c8323a"/></svg>
<div style="left:288px;top:330px;width:836px;height:1px;background:#fff;"></div>
<div style="left:289px;top:331px;width:834px;height:1px;background:#e3e3e3;"></div>
<div style="left:288px;top:330px;width:1px;height:286px;background:#fff;"></div>
<div style="left:289px;top:331px;width:1px;height:284px;background:#e3e3e3;"></div>
<div style="left:1122px;top:331px;width:1px;height:284px;background:#a0a0a0;"></div>
<div style="left:1123px;top:330px;width:1px;height:286px;background:#696969;"></div>
<div style="left:289px;top:614px;width:834px;height:1px;background:#a0a0a0;"></div>
<div style="left:288px;top:615px;width:836px;height:1px;background:#696969;"></div>
<div style="left:288px;top:310px;width:71px;height:22px;background:#f0f0f0;"></div>
<div style="left:288px;top:312px;width:1px;height:19px;background:#fff;"></div>
<div style="left:289px;top:311px;width:1px;height:1px;background:#fff;"></div>
<div style="left:290px;top:310px;width:67px;height:1px;background:#fff;"></div>
<div style="left:289px;top:312px;width:1px;height:20px;background:#e3e3e3;"></div>
<div style="left:290px;top:311px;width:67px;height:1px;background:#e3e3e3;"></div>
<div style="left:357px;top:312px;width:1px;height:19px;background:#a0a0a0;"></div>
<div style="left:358px;top:312px;width:1px;height:19px;background:#696969;"></div>
<div style="left:357px;top:311px;width:1px;height:1px;background:#696969;"></div>
<span class="t" id="t11" style="left:296px;top:314.86px;font-size:11px;line-height:13px;color:#000;letter-spacing:-0.332px;">Profile Data</span>
<div style="left:359px;top:314px;width:1px;height:16px;background:#fff;"></div>
<div style="left:360px;top:313px;width:1px;height:1px;background:#fff;"></div>
<div style="left:361px;top:312px;width:36px;height:1px;background:#fff;"></div>
<div style="left:397px;top:314px;width:1px;height:16px;background:#a0a0a0;"></div>
<div style="left:398px;top:314px;width:1px;height:16px;background:#696969;"></div>
<div style="left:397px;top:313px;width:1px;height:1px;background:#696969;"></div>
<span class="t" id="t12" style="left:363.2px;top:314.86px;font-size:11px;line-height:13px;color:#000;letter-spacing:-0.325px;">Rules</span>
<div style="left:399px;top:314px;width:1px;height:16px;background:#fff;"></div>
<div style="left:400px;top:313px;width:1px;height:1px;background:#fff;"></div>
<div style="left:401px;top:312px;width:50px;height:1px;background:#fff;"></div>
<div style="left:451px;top:314px;width:1px;height:16px;background:#a0a0a0;"></div>
<div style="left:452px;top:314px;width:1px;height:16px;background:#696969;"></div>
<div style="left:451px;top:313px;width:1px;height:1px;background:#696969;"></div>
<span class="t" id="t13" style="left:404.6px;top:314.86px;font-size:11px;line-height:13px;color:#000;letter-spacing:-0.292px;">Rules (2)</span>
<div style="left:453px;top:314px;width:1px;height:16px;background:#fff;"></div>
<div style="left:454px;top:313px;width:1px;height:1px;background:#fff;"></div>
<div style="left:455px;top:312px;width:47px;height:1px;background:#fff;"></div>
<div style="left:502px;top:314px;width:1px;height:16px;background:#a0a0a0;"></div>
<div style="left:503px;top:314px;width:1px;height:16px;background:#696969;"></div>
<div style="left:502px;top:313px;width:1px;height:1px;background:#696969;"></div>
<span class="t" id="t14" style="left:458.8px;top:314.86px;font-size:11px;line-height:13px;color:#000;letter-spacing:-0.252px;">Spacing</span>
<div style="left:504px;top:314px;width:1px;height:16px;background:#fff;"></div>
<div style="left:505px;top:313px;width:1px;height:1px;background:#fff;"></div>
<div style="left:506px;top:312px;width:66px;height:1px;background:#fff;"></div>
<div style="left:572px;top:314px;width:1px;height:16px;background:#a0a0a0;"></div>
<div style="left:573px;top:314px;width:1px;height:16px;background:#696969;"></div>
<div style="left:572px;top:313px;width:1px;height:1px;background:#696969;"></div>
<span class="t" id="t15" style="left:509.3px;top:314.86px;font-size:11px;line-height:13px;color:#000;letter-spacing:-0.254px;">Accessories</span>
<span class="t" id="t16" style="left:399.3px;top:345.86px;font-size:11px;line-height:13px;color:#000;letter-spacing:-0.324px;">Code</span>
<span class="t" id="t17" style="left:498px;top:345.86px;font-size:11px;line-height:13px;color:#000;letter-spacing:-0.518px;">Library</span>
<span class="t" id="t18" style="left:582px;top:345.86px;font-size:11px;line-height:13px;color:#000;letter-spacing:-0.328px;">Material</span>
<span class="t" id="t19" style="left:302.5px;top:372.86px;font-size:11px;line-height:13px;color:#000;letter-spacing:-0.290px;">Top Chord</span>
<div class="inp" style="left:400px;top:369px;width:90px;height:20px;"></div>
<span class="t" id="t20" style="left:402.5px;top:372.86px;font-size:11px;line-height:13px;color:#000;letter-spacing:-0.287px;">C89-41-0.95</span>
<div class="inp" style="left:498px;top:369px;width:75px;height:20px;"></div>
<span class="t" id="t21" style="left:501px;top:372.86px;font-size:11px;line-height:13px;color:#000;letter-spacing:-0.290px;">c</span>
<div class="inp" style="left:582px;top:369px;width:60px;height:20px;"></div>
<span class="t" id="t22" style="left:584.5px;top:372.86px;font-size:11px;line-height:13px;color:#000;letter-spacing:-0.230px;">G550</span>
<div class="btn" style="left:653px;top:370px;width:47px;height:18px;"></div>
<span class="t" id="t23" style="left:675.8px;top:372.86px;font-size:11px;line-height:13px;color:#000;letter-spacing:-0.263px;transform:translateX(-50%);">Select</span>
<span class="t" id="t24" style="left:302.5px;top:399.86px;font-size:11px;line-height:13px;color:#000;letter-spacing:-0.390px;">Bottom Chord</span>
<div class="inp" style="left:400px;top:396px;width:90px;height:20px;"></div>
<span class="t" id="t25" style="left:402.5px;top:399.86px;font-size:11px;line-height:13px;color:#000;letter-spacing:-0.287px;">C89-41-0.95</span>
<div class="inp" style="left:498px;top:396px;width:75px;height:20px;"></div>
<span class="t" id="t26" style="left:501px;top:399.86px;font-size:11px;line-height:13px;color:#000;letter-spacing:-0.290px;">c</span>
<div class="inp" style="left:582px;top:396px;width:60px;height:20px;"></div>
<span class="t" id="t27" style="left:584.5px;top:399.86px;font-size:11px;line-height:13px;color:#000;letter-spacing:-0.230px;">G550</span>
<div class="btn" style="left:653px;top:397px;width:47px;height:18px;"></div>
<span class="t" id="t28" style="left:675.8px;top:399.86px;font-size:11px;line-height:13px;color:#000;letter-spacing:-0.263px;transform:translateX(-50%);">Select</span>
<span class="t" id="t29" style="left:302.5px;top:426.86px;font-size:11px;line-height:13px;color:#000;letter-spacing:-0.327px;">End webs</span>
<div class="inp" style="left:400px;top:423px;width:90px;height:20px;"></div>
<span class="t" id="t30" style="left:402.5px;top:426.86px;font-size:11px;line-height:13px;color:#000;letter-spacing:-0.287px;">C89-41-0.95</span>
<div class="inp" style="left:498px;top:423px;width:75px;height:20px;"></div>
<span class="t" id="t31" style="left:501px;top:426.86px;font-size:11px;line-height:13px;color:#000;letter-spacing:-0.290px;">c</span>
<div class="inp" style="left:582px;top:423px;width:60px;height:20px;"></div>
<span class="t" id="t32" style="left:584.5px;top:426.86px;font-size:11px;line-height:13px;color:#000;letter-spacing:-0.230px;">G550</span>
<div class="btn" style="left:653px;top:424px;width:47px;height:18px;"></div>
<span class="t" id="t33" style="left:675.8px;top:426.86px;font-size:11px;line-height:13px;color:#000;letter-spacing:-0.263px;transform:translateX(-50%);">Select</span>
<span class="t" id="t34" style="left:400px;top:453.86px;font-size:11px;line-height:13px;color:#000;letter-spacing:-0.290px;">Required minimum end web length</span>
<div class="inpw" style="left:582px;top:450px;width:60px;height:20px;"></div>
<span class="t" id="t35" style="left:584.5px;top:453.86px;font-size:11px;line-height:13px;color:#000;letter-spacing:-0.290px;">82</span>
<span class="t" id="t36" style="left:302.5px;top:480.86px;font-size:11px;line-height:13px;color:#000;letter-spacing:-0.255px;">Webs</span>
<div class="inp" style="left:400px;top:477px;width:90px;height:20px;"></div>
<span class="t" id="t37" style="left:402.5px;top:480.86px;font-size:11px;line-height:13px;color:#000;letter-spacing:-0.287px;">C89-41-0.95</span>
<div class="inp" style="left:498px;top:477px;width:75px;height:20px;"></div>
<span class="t" id="t38" style="left:501px;top:480.86px;font-size:11px;line-height:13px;color:#000;letter-spacing:-0.290px;">c</span>
<div class="inp" style="left:582px;top:477px;width:60px;height:20px;"></div>
<span class="t" id="t39" style="left:584.5px;top:480.86px;font-size:11px;line-height:13px;color:#000;letter-spacing:-0.230px;">G550</span>
<div class="btn" style="left:653px;top:478px;width:47px;height:18px;"></div>
<span class="t" id="t40" style="left:675.8px;top:480.86px;font-size:11px;line-height:13px;color:#000;letter-spacing:-0.263px;transform:translateX(-50%);">Select</span>
<span class="t" id="t41" style="left:302.5px;top:507.86px;font-size:11px;line-height:13px;color:#000;letter-spacing:-0.290px;">Tyes</span>
<div class="inp" style="left:400px;top:504px;width:90px;height:20px;"></div>
<span class="t" id="t42" style="left:402.5px;top:507.86px;font-size:11px;line-height:13px;color:#000;letter-spacing:-0.287px;">C89-41-0.95</span>
<div class="inp" style="left:498px;top:504px;width:75px;height:20px;"></div>
<span class="t" id="t43" style="left:501px;top:507.86px;font-size:11px;line-height:13px;color:#000;letter-spacing:-0.290px;">c</span>
<div class="inp" style="left:582px;top:504px;width:60px;height:20px;"></div>
<span class="t" id="t44" style="left:584.5px;top:507.86px;font-size:11px;line-height:13px;color:#000;letter-spacing:-0.230px;">G550</span>
<div class="btn" style="left:653px;top:505px;width:47px;height:18px;"></div>
<span class="t" id="t45" style="left:675.8px;top:507.86px;font-size:11px;line-height:13px;color:#000;letter-spacing:-0.263px;transform:translateX(-50%);">Select</span>
<span class="t" id="t46" style="left:400px;top:534.86px;font-size:11px;line-height:13px;color:#000;letter-spacing:-0.220px;">Offset(s)</span>
<div class="inpw" style="left:498px;top:531px;width:142px;height:20px;"></div>
<span class="t" id="t47" style="left:501px;top:534.86px;font-size:11px;line-height:13px;color:#000;letter-spacing:-0.290px;">0</span>
<div class="btn" style="left:653px;top:532px;width:54px;height:18px;"></div>
<span class="t" id="t48" style="left:679.5px;top:534.86px;font-size:11px;line-height:13px;color:#000;letter-spacing:-0.219px;transform:translateX(-50%);">Refresh</span>
<span class="t" id="t49" style="left:318px;top:561.86px;font-size:11px;line-height:13px;color:#000;letter-spacing:-0.281px;">Apex joint</span>
<div class="inp" style="left:400px;top:558px;width:90px;height:20px;"></div>
<span class="t" id="t50" style="left:402.5px;top:561.86px;font-size:11px;line-height:13px;color:#000;letter-spacing:-0.287px;">C89-41-0.95</span>
<div class="inp" style="left:498px;top:558px;width:75px;height:20px;"></div>
<span class="t" id="t51" style="left:501px;top:561.86px;font-size:11px;line-height:13px;color:#000;letter-spacing:-0.290px;">c</span>
<div class="inp" style="left:582px;top:558px;width:60px;height:20px;"></div>
<span class="t" id="t52" style="left:584.5px;top:561.86px;font-size:11px;line-height:13px;color:#000;letter-spacing:-0.230px;">G550</span>
<div class="btn" style="left:653px;top:559px;width:47px;height:18px;"></div>
<span class="t" id="t53" style="left:675.8px;top:561.86px;font-size:11px;line-height:13px;color:#000;letter-spacing:-0.263px;transform:translateX(-50%);">Select</span>
<div style="left:302px;top:561px;width:13px;height:13px;border:1px solid #333;background:#fff;"></div>
<div style="left:302px;top:588px;width:13px;height:13px;border:1px solid #333;background:#fff;"></div>
<svg style="left:302px;top:588px" width="13" height="13" viewBox="0 0 13 13"><path d="M2.5 6.5 L5 9.200 L10.500 3.300" stroke="#222" stroke-width="1.1" fill="none"/></svg>
<span class="t" id="t54" style="left:318px;top:588.86px;font-size:11px;line-height:13px;color:#000;letter-spacing:-0.293px;">Show only profiles</span>
<div style="left:901px;top:624px;width:68px;height:21px;border:2px solid #0078d7;background:#e1e1e1;"></div>
<span class="t" id="t55" style="left:934.5px;top:628.86px;font-size:11px;line-height:13px;color:#000;letter-spacing:0.047px;transform:translateX(-50%);">OK</span>
<div class="btn" style="left:978px;top:624px;width:68px;height:21px;"></div>
<span class="t" id="t56" style="left:1011.5px;top:628.86px;font-size:11px;line-height:13px;color:#000;letter-spacing:-0.208px;transform:translateX(-50%);">Cancel</span>
<div class="btn" style="left:1055px;top:624px;width:68px;height:21px;"></div>
<span class="t" id="t57" style="left:1088.5px;top:628.86px;font-size:11px;line-height:13px;color:#000;letter-spacing:-0.406px;transform:translateX(-50%);">Help</span>
<svg style="left:1120px;top:678px" width="13" height="13" viewBox="0 0 13 13" shape-rendering="crispEdges"><rect x="9" y="4" width="2" height="2" fill="#b4b4b4"/><rect x="6" y="7" width="2" height="2" fill="#b4b4b4"/><rect x="9" y="7" width="2" height="2" fill="#b4b4b4"/><rect x="3" y="10" width="2" height="2" fill="#b4b4b4"/><rect x="6" y="10" width="2" height="2" fill="#b4b4b4"/><rect x="9" y="10" width="2" height="2" fill="#b4b4b4"/></svg>
</body></html>
